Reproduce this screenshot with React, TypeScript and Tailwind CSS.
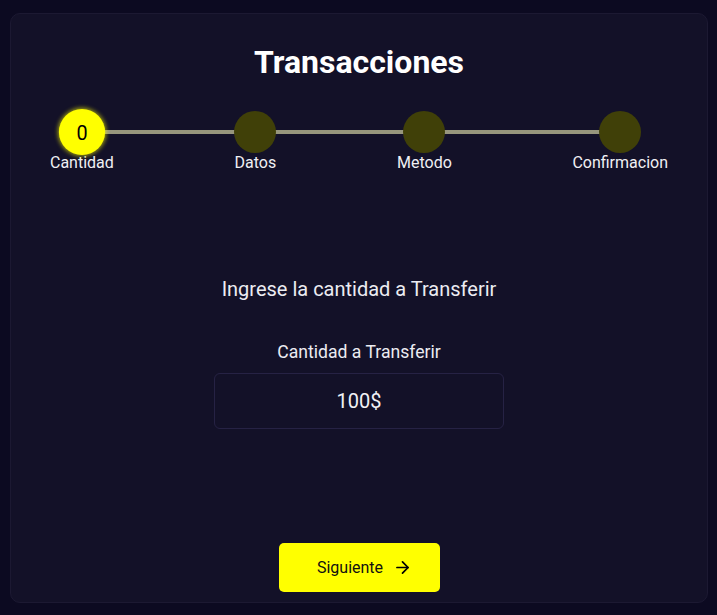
import { ArrowRight } from "lucide-react";

const steps = ["Cantidad", "Datos", "Metodo", "Confirmacion"];

export default function App() {
  return (
    <div className="min-h-screen bg-[#0c0a21] pl-[10px] pt-[13px] font-['Roboto',sans-serif]">
      <div className="w-[698px] h-[590px] rounded-[10px] border border-[#1c1932] bg-[#131128] flex flex-col items-center">
        <h1 className="mt-[30px] text-[32px] leading-[36px] font-bold text-white">Transacciones</h1>

        {/* Stepper */}
        <div className="relative w-full mt-[31px] px-[39px] flex justify-between">
          <div className="absolute left-[71px] right-[88px] top-[19px] h-[4px] bg-[#97967d]"></div>
          {steps.map((s, i) => (
            <div key={s} className="relative flex flex-col items-center">
              {i === 0 ? (
                <div className="w-[42px] h-[42px] rounded-full bg-[#ffff00] scale-110 shadow-[0_0_4px_1px_rgba(255,255,0,0.6)] flex items-center justify-center text-[18px] text-black">
                  0
                </div>
              ) : (
                <div className="w-[42px] h-[42px] rounded-full bg-[#404008]"></div>
              )}
              <span className="text-[16px] leading-[20px] text-[#f0f0f4]">{s}</span>
            </div>
          ))}
        </div>

        <p className="mt-[102px] text-[20px] leading-[28px] text-[#ececf2]">Ingrese la cantidad a Transferir</p>

        <label className="mt-[38px] text-[17.6px] leading-[22px] text-[#ececf2]">Cantidad a Transferir</label>
        <div className="mt-[10px] w-[290px] h-[56px] rounded-[6px] border border-[#262244] flex items-center justify-center text-[20px] text-[#f2f2f6]">
          100$
        </div>

        <button className="mt-[114px] w-[161px] h-[49px] pl-[11px] rounded-[5px] bg-[#ffff00] flex items-center justify-center gap-[10px] text-[16px] text-[#111111]">
          <span>Siguiente</span>
          <ArrowRight size={19} strokeWidth={2.2} className="text-black" />
        </button>
      </div>
    </div>
  );
}
